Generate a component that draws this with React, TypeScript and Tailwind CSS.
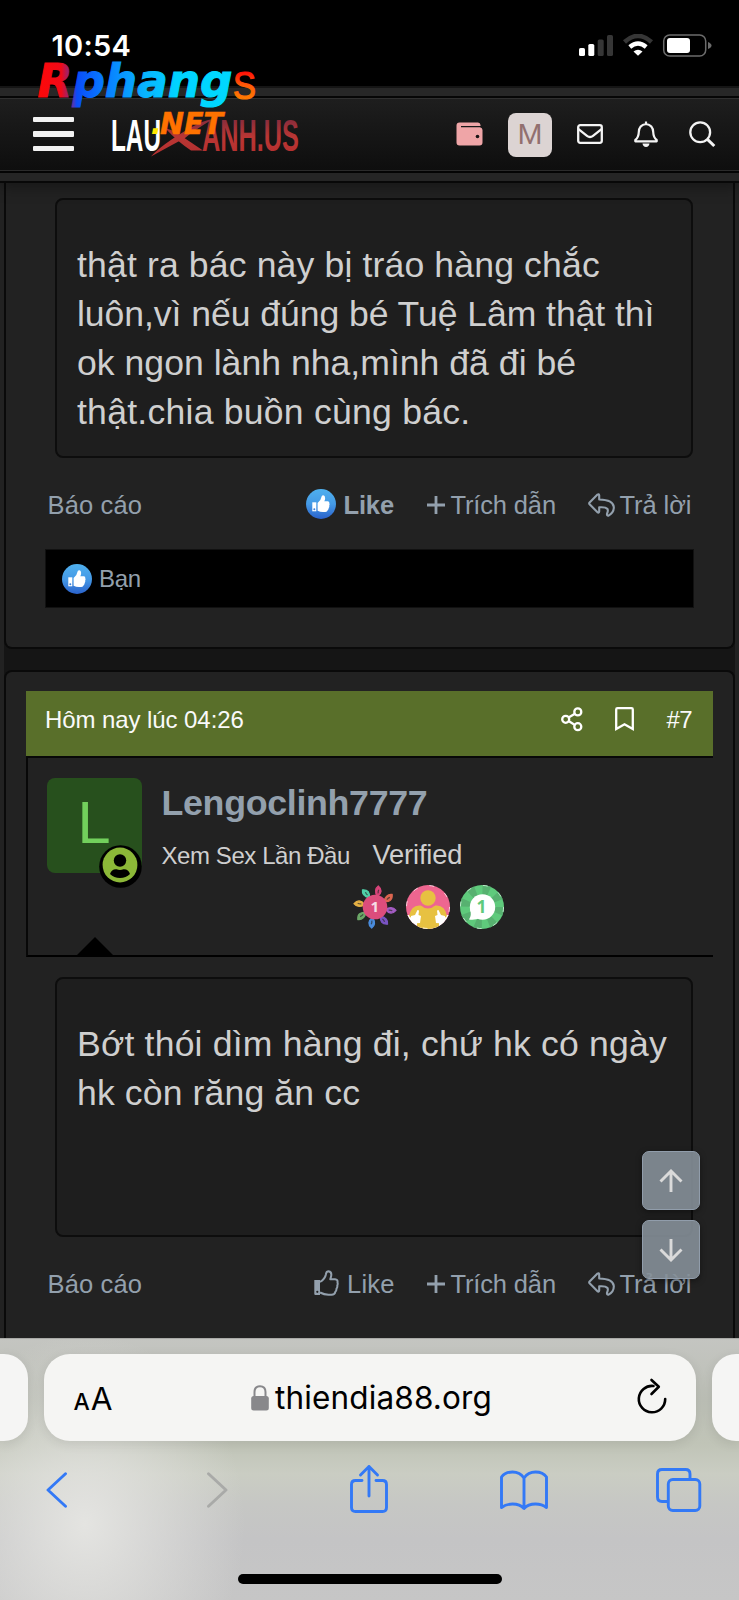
import type { ReactNode } from "react";

function StatusBar() {
  return (
    <div className="flex h-[86px] w-full shrink-0 items-start bg-black pt-[28.500px] pl-[51.500px] text-white">
      <span className="w-[527.500px] font-['Inter',sans-serif] text-[29px] leading-[34px] font-semibold tracking-[0.300px]">10:54</span>
      <svg className="mt-[5.500px] block" width="134" height="24" viewBox="0 0 134 24">
        <rect x="0" y="14" width="6" height="8" rx="1.6" fill="#fff" />
        <rect x="9.300" y="10" width="6" height="12" rx="1.600" fill="#fff" />
        <rect x="18.700" y="5.500" width="6" height="16.500" rx="1.600" fill="#363636" />
        <rect x="28" y="1" width="6" height="21" rx="1.600" fill="#363636" />
        <path d="M45.500 8 Q59 -4.200 72.500 8" stroke="#363636" strokeWidth="4.500" fill="none" />
        <path d="M50.800 13 Q59 6 67.200 13" stroke="#fff" strokeWidth="4.300" fill="none" />
        <path d="M54.500 17.500 Q59 14 63.500 17.500 L59 21.800 Z" fill="#fff" />
        <rect x="84.700" y="1" width="42" height="21" rx="6" fill="none" stroke="#6c6c6c" strokeWidth="1.500" />
        <rect x="88" y="4" width="23" height="15" rx="3" fill="#fff" />
        <path d="M129 8 Q132.500 9.500 132.500 11.500 Q132.500 13.500 129 15 Z" fill="#6c6c6c" />
      </svg>
    </div>
  );
}

function SiteLogo() {
  return (
    <svg className="block overflow-visible" width="206" height="50" viewBox="106 110 206 50">
      <defs>
        <linearGradient id="logoRed" gradientUnits="userSpaceOnUse" x1="0" y1="119" x2="0" y2="151">
          <stop offset="0" stopColor="#862c3c" />
          <stop offset="0.550" stopColor="#b93634" />
          <stop offset="1" stopColor="#b53130" />
        </linearGradient>
      </defs>
      <text x="111" y="150.500" fontFamily="'Liberation Sans Narrow','Liberation Sans',sans-serif" fontWeight="700" fontSize="45" fill="#fff" textLength="50" lengthAdjust="spacingAndGlyphs">LAU</text>
      <path d="M151 156.500 Q161 145 190 128 Q204 120 213 119 Q193 131 185 138 Q170 146 151 156.500 Z" fill="url(#logoRed)" />
      <path d="M165 128 L174 131 L203 150.500 L191 150.500 Q178 142 165 128 Z" fill="url(#logoRed)" />
      <text x="202" y="150.500" fontFamily="'Liberation Sans Narrow','Liberation Sans',sans-serif" fontWeight="700" fontSize="45" fill="url(#logoRed)" textLength="97" lengthAdjust="spacingAndGlyphs">ANH.US</text>
    </svg>
  );
}

function Watermark() {
  return (
    <svg className="pointer-events-none absolute top-[52px] left-[30px] z-20" width="236" height="90" viewBox="30 52 236 90">
      <defs>
        <linearGradient id="markMain" gradientUnits="userSpaceOnUse" x1="38" y1="0" x2="232" y2="0">
          <stop offset="0" stopColor="#ff0808" />
          <stop offset="0.120" stopColor="#f00a18" />
          <stop offset="0.170" stopColor="#7a2a90" />
          <stop offset="0.200" stopColor="#0a4cf8" />
          <stop offset="0.330" stopColor="#0878ff" />
          <stop offset="0.550" stopColor="#08b4ff" />
          <stop offset="0.720" stopColor="#00d4ff" />
          <stop offset="1" stopColor="#00d8ff" />
        </linearGradient>
        <linearGradient id="markTail" gradientUnits="userSpaceOnUse" x1="0" y1="71" x2="0" y2="99">
          <stop offset="0" stopColor="#ff0a08" />
          <stop offset="0.500" stopColor="#ff5a08" />
          <stop offset="1" stopColor="#ff7a00" />
        </linearGradient>
      </defs>
      <text x="37.500" y="96.800" fontFamily="'DejaVu Sans',sans-serif" fontStyle="italic" fontWeight="700" fontSize="46" fill="url(#markMain)" stroke="url(#markMain)" strokeWidth="1.100" strokeLinejoin="miter" textLength="195" lengthAdjust="spacingAndGlyphs">Rphang</text>
      <text x="233" y="98.500" fontFamily="'Liberation Sans',sans-serif" fontSize="38" fill="url(#markTail)" stroke="url(#markTail)" strokeWidth="1.200" textLength="23" lengthAdjust="spacingAndGlyphs">S</text>
      <text x="150.500" y="133.500" fontFamily="'DejaVu Sans',sans-serif" fontStyle="italic" fontWeight="700" fontSize="31" fill="#ffe800">.</text>
      <text x="160" y="133.500" fontFamily="'DejaVu Sans',sans-serif" fontStyle="italic" fontWeight="700" fontSize="31" fill="#ff7200" stroke="#ff7200" strokeWidth="0.600" textLength="63" lengthAdjust="spacingAndGlyphs">NET</text>
    </svg>
  );
}

function Header() {
  return (
    <header className="relative z-10 w-full shrink-0 shadow-[0_4px_14px_rgba(0,0,0,0.35)]">
      <div className="h-[12px] border-t-[2px] border-b-[2px] border-t-[#151515] border-b-[#060606] bg-[#272727]" />
      <div className="flex h-[73px] items-center border-t border-b border-t-[#303030] border-b-[#2b2b2b] bg-linear-to-b from-[#1e1e1e] to-[#0e0e0e] pl-[33px]">
        <div className="mt-[-1px] flex w-[41px] flex-col gap-[9px]">
          <span className="h-[5.500px] rounded-[1px] bg-[#f2f2f2]" />
          <span className="h-[5.500px] rounded-[1px] bg-[#f2f2f2]" />
          <span className="h-[5.500px] rounded-[1px] bg-[#f2f2f2]" />
        </div>
        <div className="ml-[32px]"><SiteLogo /></div>
        <svg className="mt-[-1px] ml-[144px]" width="27" height="24" viewBox="0 0 27 24">
          <path d="M3.500 0.500 H22 Q24.300 0.500 24.500 3 V4 H5 V5.300 H24 Q26.500 5.800 26.500 8 V20.500 Q26.500 23.500 23.500 23.500 H3.500 Q0.500 23.500 0.500 20.500 V3.500 Q0.500 0.500 3.500 0.500 Z" fill="#efa5a7" />
          <circle cx="21.500" cy="14.500" r="1.800" fill="#191414" />
        </svg>
        <div className="ml-[25px] flex h-[44px] w-[44px] items-center justify-center rounded-[8px] bg-[#dcd4d3] pb-[2px] font-['Liberation_Sans',sans-serif] text-[30px] leading-none text-[#92706f]">M</div>
        <svg className="mt-[-1px] ml-[25px]" width="26" height="20" viewBox="0 0 26 20">
          <rect x="1.200" y="1.200" width="23.600" height="17.600" rx="2" fill="none" stroke="#f4f4f4" strokeWidth="2.300" />
          <path d="M1.500 5.200 L10 11.800 Q13 14.200 16 11.800 L24.500 5.200" fill="none" stroke="#f4f4f4" strokeWidth="2.300" />
        </svg>
        <svg className="ml-[30.500px]" width="24" height="27" viewBox="0 0 24 27">
          <path d="M12 0.500 V3 M12 3 Q5 4 4.800 11 Q4.600 16.500 1.300 19 V20.300 H22.700 V19 Q19.400 16.500 19.200 11 Q19 4 12 3 Z" fill="none" stroke="#f4f4f4" strokeWidth="2.200" strokeLinejoin="round" />
          <path d="M8.500 22.600 H15.500 Q15 26 12 26 Q9 26 8.500 22.600 Z" fill="#f4f4f4" />
        </svg>
        <svg className="mt-[-1px] ml-[31.500px]" width="27" height="27" viewBox="0 0 27 27">
          <circle cx="11.200" cy="11.200" r="9.900" fill="none" stroke="#f4f4f4" strokeWidth="2.300" />
          <path d="M18.200 18.200 L25.300 25" stroke="#f4f4f4" strokeWidth="3" />
        </svg>
      </div>
      <div className="h-[12px] border-t-[2px] border-b-[2px] border-t-[#040404] border-b-[#080808] bg-[#252525]" />
    </header>
  );
}

function ThumbBadge() {
  return (
    <svg className="block shrink-0" width="30" height="30" viewBox="0 0 30 30">
      <defs>
        <linearGradient id="likeBlue" x1="0" y1="0" x2="0" y2="1">
          <stop offset="0" stopColor="#4fb0ee" />
          <stop offset="0.500" stopColor="#459ae6" />
          <stop offset="1" stopColor="#2a62cc" />
        </linearGradient>
      </defs>
      <circle cx="15" cy="15" r="15" fill="url(#likeBlue)" />
      <path d="M6.300 13.300 H10.300 V22.300 H6.300 Z" fill="#fff" />
      <circle cx="8.300" cy="20.300" r="1" fill="#3b80da" />
      <path d="M11.600 14 Q15 11.500 15.500 7.800 Q15.700 6.200 17.200 6.300 Q19.300 6.600 19.100 9.500 Q19 10.900 18.300 12.300 H21.800 Q23.600 12.500 23.300 14.200 Q23.900 15.300 23.200 16.600 Q23.600 18 22.700 19 Q22.700 20.500 21.700 21.200 Q21.300 22.900 19.300 22.900 H17 Q14 22.900 11.600 21.700 Z" fill="#fff" />
    </svg>
  );
}

function ThumbOutline() {
  return (
    <svg className="block shrink-0" width="25" height="26" viewBox="0 0 25 26">
      <path d="M0.300 10 H6 V25 H1.300 Q0.300 25 0.300 24 Z" fill="#93a0ad" />
      <circle cx="3.300" cy="21.800" r="1.100" fill="#222" />
      <path d="M6 12 Q11 9 11.800 4.700 Q12.300 1.200 14.400 1.300 Q17.600 1.700 17.300 5.200 Q17.100 7.200 16.300 9.200 H21 Q24 9.500 23.500 12.500 Q24 14 23.300 15.500 Q23.600 17.300 22.500 18.700 Q22.500 20.800 21.300 21.800 Q20.800 24.700 17.500 24.700 H14.500 Q10 24.700 6 22.500" fill="none" stroke="#93a0ad" strokeWidth="2" strokeLinejoin="round" />
    </svg>
  );
}

function ReplyIcon() {
  return (
    <svg className="block shrink-0" width="27" height="24" viewBox="0 0 27 24">
      <path d="M1.600 9.500 Q0.800 10.400 1.600 11.300 L9.500 19.300 Q11 20.200 11.200 18.500 V14.300 Q17.500 13.700 19.500 16 Q20.400 17.800 19 20.800 Q18.700 23 20.600 22.600 Q26 19.500 25.800 14 Q25.300 6.800 11.200 6.500 V2.300 Q11 0.500 9.500 1.600 Z" fill="none" stroke="#93a0ad" strokeWidth="2.100" strokeLinejoin="round" />
    </svg>
  );
}

function ActionRow({ liked }: { liked: boolean }) {
  return (
    <div className="flex h-[91px] pt-[32px] pl-[41px] text-[25.500px] leading-[30px] whitespace-nowrap text-[#93a0ad]">
      <span className="w-[258.500px] pl-[0.500px] tracking-[0.140px]">Báo cáo</span>
      {liked ? (
        <span className="flex w-[121px] gap-[8px]">
          <span className="mt-[-1px]"><ThumbBadge /></span>
          <span className="font-bold tracking-[-0.150px]">Like</span>
        </span>
      ) : (
        <span className="flex w-[121px] gap-[8px] pl-[8.500px]">
          <span className="mt-[0.500px]"><ThumbOutline /></span>
          <span className="tracking-[0.200px]">Like</span>
        </span>
      )}
      <span className="flex w-[161px] gap-[6px]">
        <svg className="mt-[5.500px] block" width="18" height="18" viewBox="0 0 18 18">
          <path d="M9 0 V18 M0 9 H18" stroke="#93a0ad" strokeWidth="2.800" />
        </svg>
        <span className="tracking-[-0.150px]">Trích dẫn</span>
      </span>
      <span className="flex gap-[5px]">
        <span className="mt-[2.500px]"><ReplyIcon /></span>
        <span className="tracking-[-0.070px]">Trả lời</span>
      </span>
    </div>
  );
}

function MessageBox({ children }: { children: ReactNode }) {
  return (
    <div className="ml-[49px] h-[260px] w-[638px] rounded-[8px] border-[2px] border-[#0d0d0d] bg-[#1e1e1e] pt-[40.500px] pl-[20px] text-[35.600px] leading-[49.300px] whitespace-nowrap text-[#cfcfcf]">
      {children}
    </div>
  );
}

const petals = ["#4fd0a8", "#d8447a", "#dc6650", "#a45cc4", "#7a54c4", "#4a8cdc", "#6ca868", "#e4b044"];

function Medals() {
  return (
    <div className="flex items-center gap-[9.500px]">
      <svg width="44" height="44" viewBox="0 0 44 44">
        {petals.map((color, i) => (
          <g key={color} transform={`rotate(${i * 45 - 32} 22 22)`}>
            <path d="M22 11.500 Q16.500 5.500 20.500 0.800 Q27.500 4.500 22 11.500 Z" fill={color} stroke={color} strokeWidth="1.300" strokeLinejoin="round" />
            <path d="M22 8 Q21.300 6 21.800 4.300" stroke="#2a2a2a" strokeOpacity="0.700" strokeWidth="1.200" fill="none" />
          </g>
        ))}
        <circle cx="22" cy="22" r="12.300" fill="#dc4d7c" />
        <text x="21.700" y="27.300" textAnchor="middle" fontFamily="'Open Sans','Liberation Sans',sans-serif" fontWeight="700" fontSize="15" fill="#f6dce6">1</text>
      </svg>
      <svg width="44" height="44" viewBox="0 0 44 44">
        <clipPath id="medalClip"><circle cx="22" cy="22" r="22" /></clipPath>
        <g clipPath="url(#medalClip)">
          <rect width="44" height="44" fill="#ee6690" />
          <rect y="30" width="44" height="14" fill="#fff" />
          <path d="M3 31 Q5 20 14 20.500 H30 Q39 20 41 31 L33 38 V44 H11 V38 Z" fill="#e7c141" />
          <circle cx="22" cy="13.500" r="10" fill="#ee6690" />
          <circle cx="22" cy="13" r="7.700" fill="#e7c141" />
          <path d="M5 31 L9 30 L11.500 25 L13 25.500 L12.500 30 L15 31 L14 38 L7 38.500 L5 36 Z" fill="#fff" />
          <path d="M39 31 L35 30 L32.500 25 L31 25.500 L31.500 30 L29 31 L30 38 L37 38.500 L39 36 Z" fill="#fff" />
        </g>
        <circle cx="22" cy="22" r="21.500" fill="none" stroke="#fff" strokeDasharray="5 12" strokeOpacity="0.700" />
      </svg>
      <svg width="44" height="44" viewBox="0 0 44 44">
        <circle cx="22" cy="22" r="22" fill="#5fca7c" />
        <circle cx="22" cy="22" r="17" fill="none" stroke="#57b170" strokeWidth="10" strokeDasharray="6.670 6.680" />
        <circle cx="22" cy="22" r="21.600" fill="none" stroke="#e8fff0" strokeDasharray="5 12" strokeOpacity="0.700" />
        <circle cx="22.500" cy="22" r="12.700" fill="#fff" />
        <path d="M10 24 Q12 30 9 34.500 Q15 35.500 20 33 Z" fill="#fff" />
        <text x="21.500" y="28" textAnchor="middle" fontFamily="'Open Sans','Liberation Sans',sans-serif" fontWeight="700" fontSize="17.500" fill="#5fca7c">1</text>
      </svg>
    </div>
  );
}

function PostTop() {
  return (
    <>
      <div className="ml-[19.500px] flex h-[65px] w-[687.500px] items-start bg-[#596f2a] pl-[19.500px] text-[24px] leading-[28px] whitespace-nowrap text-[#fafafa]">
        <span className="mt-[15px] w-[515.500px] tracking-[-0.080px]">Hôm nay lúc 04:26</span>
        <svg className="mt-[16px] block" width="22" height="25" viewBox="0 0 22 25">
          <g fill="none" stroke="#fff" strokeWidth="2.300">
            <circle cx="4.700" cy="12.300" r="3.500" />
            <circle cx="16.800" cy="4.900" r="3.500" />
            <circle cx="16.800" cy="19.700" r="3.500" />
            <path d="M7.600 10.500 L13.900 6.700 M7.600 14.100 L13.900 17.900" />
          </g>
        </svg>
        <svg className="mt-[16px] ml-[32px] block" width="19" height="24" viewBox="0 0 19 24">
          <path d="M1.200 22 V2.500 Q1.200 1.200 2.500 1.200 H16.500 Q17.800 1.200 17.800 2.500 V22 L9.500 17.300 Z" fill="none" stroke="#fff" strokeWidth="2.300" />
        </svg>
        <span className="mt-[15px] ml-[33px] tracking-[-0.500px]">#7</span>
      </div>
      <div className="relative ml-[19.500px] flex h-[201px] w-[687.500px] border-t-[2px] border-b-[2px] border-l-[2px] border-[#080808] border-b-black pt-[19.500px] pl-[19.500px]">
        <div className="relative h-[95px] w-[95px] shrink-0 rounded-[8px] bg-[#27501d] pt-[12px] pl-[30.500px] font-['Liberation_Sans',sans-serif] text-[59.500px] leading-[66px] text-[#72d05c]">
          L
          <svg className="absolute top-[67px] left-[52px]" width="43" height="43" viewBox="0 0 43 43">
            <circle cx="21.500" cy="21.500" r="21.300" fill="#000" />
            <circle cx="21" cy="20" r="17.400" fill="#8cb838" />
            <circle cx="21" cy="15.500" r="6.200" fill="#000" />
            <path d="M11 29 Q12.500 24 17.500 24.300 Q21 25.500 24.500 24.300 Q29.500 24 31 29 Q27 33 21 33 Q15 33 11 29 Z" fill="#000" />
          </svg>
        </div>
        <div className="flex flex-col pl-[19.500px] whitespace-nowrap text-[#cfcfcf]">
          <span className="mt-[5px] text-[35.800px] leading-[40px] font-bold tracking-[-0.330px] text-[#93a0ad]">Lengoclinh7777</span>
          <div className="mt-[15px] flex h-[38px] items-baseline leading-[34px]">
            <span className="w-[211px] text-[24px] tracking-[-0.420px]">Xem Sex Lần Đầu</span>
            <span className="text-[27.300px] tracking-[-0.150px]">Verified</span>
          </div>
          <div className="mt-[9.500px] ml-[191px]"><Medals /></div>
        </div>
        <svg className="absolute bottom-0 left-[49px]" width="36" height="18" viewBox="0 0 36 18">
          <path d="M0 18 L18 0 L36 18 Z" fill="#000" />
        </svg>
      </div>
    </>
  );
}

function ScrollButton({ down }: { down?: boolean }) {
  return (
    <div className="flex h-[59px] w-[58px] items-center justify-center rounded-[7px] border-[1.500px] border-[#919dab] bg-[#858f98]/90 shadow-[0_2px_6px_rgba(0,0,0,0.4)]">
      <svg className={down ? "rotate-180" : ""} width="24" height="24" viewBox="0 0 24 24">
        <path d="M12 23 V2 M1.500 12.500 L12 2 L22.500 12.500" fill="none" stroke="#dadada" strokeWidth="2.900" />
      </svg>
    </div>
  );
}

function BrowserBar() {
  return (
    <footer className="relative z-10 flex h-[262px] w-full shrink-0 flex-col overflow-hidden border-t border-[#a9aaa7] bg-[radial-gradient(ellipse_160px_190px_at_85px_185px,#e4e4e1_0%,rgba(228,228,225,0)_100%),linear-gradient(to_bottom,#c4c5c1_0px,#bcbfb6_60px,#c0c4b7_105px,#cacdc3_135px,#c6c7c4_165px,#c4c4c5_200px,#c6c6c6_262px)]">
      <div className="mt-[15px] flex h-[87px]">
        <div className="w-[27.500px] rounded-r-[24px] bg-[#f5f5f4] shadow-[0_3px_12px_rgba(0,0,0,0.09)]" />
        <div className="ml-[16px] flex w-[652px] items-center rounded-[26px] bg-[#f5f5f3] font-['Inter',sans-serif] text-black shadow-[0_3px_12px_rgba(0,0,0,0.09)]">
          <div className="mt-[5px] flex w-[207.500px] items-baseline pl-[30px] leading-[40px]">
            <span className="text-[23px] font-medium">A</span>
            <span className="ml-[1px] text-[31.500px]">A</span>
          </div>
          <svg className="block" width="18" height="26" viewBox="0 0 18 26">
            <path d="M3.500 12 V7 Q3.500 1.200 9 1.200 Q14.500 1.200 14.500 7 V12" fill="none" stroke="#88888b" strokeWidth="2" />
            <rect x="0.200" y="11" width="17.600" height="14.500" rx="2.500" fill="#88888b" />
          </svg>
          <span className="ml-[6px] w-[361.500px] text-[31.500px] leading-[40px] tracking-[0.140px]">thiendia88.org</span>
          <svg className="mt-[-4px] block" width="32" height="38" viewBox="0 0 32 38">
            <path d="M16.500 9 A13.200 13.200 0 1 0 28.200 22" fill="none" stroke="#000" strokeWidth="2.600" strokeLinecap="round" />
            <path d="M14.500 3 L21.800 9.800 L14.500 17" fill="none" stroke="#000" strokeWidth="2.600" strokeLinecap="round" strokeLinejoin="round" />
          </svg>
        </div>
        <div className="ml-[16px] flex-1 rounded-l-[24px] bg-[#f5f5f4] shadow-[0_3px_12px_rgba(0,0,0,0.09)]" />
      </div>
      <div className="mt-[19px] flex h-[60px] items-center pl-[46px]">
        <svg width="22" height="36" viewBox="0 0 22 36">
          <path d="M19.500 1.700 L2 18 L19.500 34.300" fill="none" stroke="#3379f6" strokeWidth="2.900" strokeLinecap="round" strokeLinejoin="round" />
        </svg>
        <svg className="ml-[137.500px]" width="22" height="36" viewBox="0 0 22 36">
          <path d="M2.500 1.700 L20 18 L2.500 34.300" fill="none" stroke="#a9aaa8" strokeWidth="2.900" strokeLinecap="round" strokeLinejoin="round" />
        </svg>
        <svg className="mt-[-2px] ml-[122.500px]" width="38" height="50" viewBox="0 0 38 50">
          <path d="M12 16.500 H5.500 Q1.500 16.500 1.500 20.500 V43.500 Q1.500 47.500 5.500 47.500 H32.500 Q36.500 47.500 36.500 43.500 V20.500 Q36.500 16.500 32.500 16.500 H26 M19 32 V2.500 M10.500 11 L19 2.500 L27.500 11" fill="none" stroke="#3379f6" strokeWidth="2.900" strokeLinecap="round" strokeLinejoin="round" />
        </svg>
        <svg className="mt-[2px] ml-[112px]" width="48" height="42" viewBox="0 0 48 42">
          <path d="M24 38.500 Q20 34 12.500 34 Q6 34 1.500 37.500 V7 Q5 2 12.500 2 Q20 2 24 8 Q28 2 35.500 2 Q43 2 46.500 7 V37.500 Q42 34 35.500 34 Q28 34 24 38.500 Z M24 8 V38" fill="none" stroke="#3379f6" strokeWidth="2.900" strokeLinejoin="round" />
        </svg>
        <svg className="ml-[108px]" width="46" height="44" viewBox="0 0 46 44">
          <path d="M34 11 V6 Q34 1.500 29.500 1.500 H6 Q1.500 1.500 1.500 6 V29 Q1.500 33.500 6 33.500 H12" fill="none" stroke="#3379f6" strokeWidth="2.900" />
          <rect x="12.300" y="11.500" width="31.500" height="31" rx="4.500" fill="none" stroke="#3379f6" strokeWidth="2.900" />
        </svg>
      </div>
      <div className="mt-[54px] h-[10px] w-[264px] self-center rounded-full bg-black" />
    </footer>
  );
}

export default function App() {
  return (
    <div className="relative flex h-[1600px] w-[739px] flex-col overflow-hidden bg-[#222222] font-['Liberation_Sans',Arial,sans-serif]">
      <StatusBar />
      <Header />
      <Watermark />
      <main className="mx-[4px] flex h-[1155px] shrink-0 flex-col bg-[#151515]">
        <article className="h-[466px] shrink-0 rounded-b-[8px] border-x-[2px] border-b-[2px] border-[#0a0a0a] bg-[#222222] pt-[15px]">
          <MessageBox>
            <p className="tracking-[0.140px]">thật ra bác này bị tráo hàng chắc</p>
            <p className="tracking-[-0.060px]">luôn,vì nếu đúng bé Tuệ Lâm thật thì</p>
            <p className="tracking-[0.020px]">ok ngon lành nha,mình đã đi bé</p>
            <p className="tracking-[0.240px]">thật.chia buồn cùng bác.</p>
          </MessageBox>
          <ActionRow liked />
          <div className="ml-[39px] flex h-[59px] w-[648.500px] items-center gap-[7px] border-[1.500px] border-[#111] bg-black pl-[16px] text-[24px] leading-[28px] tracking-[-0.300px] text-[#93a0ad]">
            <ThumbBadge />
            <span>Bạn</span>
          </div>
        </article>
        <article className="mt-[21px] h-[700px] shrink-0 rounded-t-[8px] border-x-[2px] border-t-[2px] border-[#0a0a0a] bg-[#222222] pt-[19px]">
          <PostTop />
          <div className="h-[20px]" />
          <MessageBox>
            <p className="tracking-[0.190px]">Bớt thói dìm hàng đi, chứ hk có ngày</p>
            <p className="tracking-[0.130px]">hk còn răng ăn cc</p>
          </MessageBox>
          <ActionRow liked={false} />
        </article>
      </main>
      <BrowserBar />
      <div className="absolute top-[1151px] left-[641.500px] flex flex-col gap-[10px]">
        <ScrollButton />
        <ScrollButton down />
      </div>
    </div>
  );
}
